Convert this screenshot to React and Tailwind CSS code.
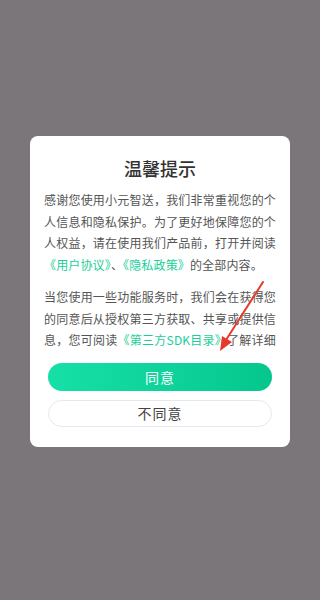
import React from 'react';

const App = () => {
  const link = "text-[#19cf98]";

  return (
    <div className="w-[320px] h-[600px] bg-[#7b7679] flex items-start justify-center pt-[136px] font-['Noto_Sans_CJK_SC','Noto_Sans',sans-serif]">
      {/* Dialog card */}
      <div className="relative w-[260px] h-[311px] bg-white rounded-[8px] flex flex-col pt-[20px]">
        <div className="text-center text-[18px] leading-[24px] font-medium text-[#333]">温馨提示</div>

        {/* Scrolling body text, clipped */}
        <div className="mt-[9px] h-[162px] overflow-hidden px-[14px] text-[12px] leading-[21.5px] tracking-[0.15px] text-[#555] text-justify">
          <p>
            感谢您使用小元智送，我们非常重视您的个人信息和隐私保护。为了更好地保障您的个人权益，请在使用我们产品前，打开并阅读
            <span className={link}>《用户协议》</span>、<span className={link}>《隐私政策》</span>的全部内容。
          </p>
          <p className="mt-[11px]">
            当您使用一些功能服务时，我们会在获得您的同意后从授权第三方获取、共享或提供信息，您可阅读
            <span className={link}>《第三方SDK目录》</span>了解详细信息。如您同意，请点击“同意”开始接受我们的服务。
          </p>
        </div>

        {/* Buttons */}
        <div className="mt-[12px] px-[18px] flex flex-col gap-[9px]">
          <button className="h-[28px] w-full rounded-full bg-gradient-to-r from-[#16e0a7] to-[#05c78e] text-white text-[14px] tracking-[1px]">
            同意
          </button>
          <button className="h-[27px] w-full rounded-full border border-[#e6e8ee] bg-white text-[#444] text-[14px] tracking-[1px]">
            不同意
          </button>
        </div>

        {/* Red annotation arrow */}
        <svg className="absolute left-0 top-0 pointer-events-none" width="260" height="311" viewBox="0 0 260 311">
          <line x1="233" y1="146" x2="196" y2="204" stroke="#e63b2c" strokeWidth="2" strokeLinecap="round" />
          <polygon points="190,215 192,200 202,206" fill="#e63b2c" />
        </svg>
      </div>
    </div>
  );
};

export default App;
